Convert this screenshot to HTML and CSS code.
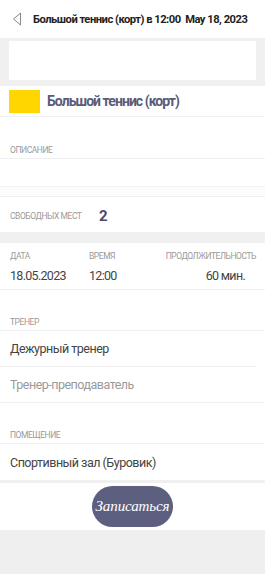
FILE: index.html
```html
<!DOCTYPE html>
<html lang="ru">
<head>
  <meta charset="utf-8" />
  <meta name="viewport" content="width=device-width,initial-scale=1" />
  <title>Большой теннис (корт)</title>
  <link rel="stylesheet" href="styles.css">
</head>
<body>
<div class="page">
  <header class="top">
    <svg class="back" width="10" height="14" viewBox="0 0 10 14">
      <path d="M8.5 1 L1.5 7 L8.5 13 Z" fill="none" stroke="#888" stroke-width="1" stroke-linejoin="round"/>
    </svg>
    <div class="top-title">Большой теннис (корт) в 12:00&nbsp; May 18, 2023</div>
  </header>

  <div class="band"><div class="band-box"></div></div>

  <div class="name-row">
    <span class="swatch"></span>
    <span class="name">Большой теннис (корт)</span>
  </div>

  <div class="label-row desc-label">ОПИСАНИЕ</div>
  <div class="empty-row"></div>
  <div class="gap-row"></div>

  <div class="seats-row">
    <span class="label">СВОБОДНЫХ МЕСТ</span>
    <span class="seats">2</span>
  </div>

  <div class="divider"></div>

  <div class="info">
    <div class="col">
      <span class="label">ДАТА</span>
      <span class="value">18.05.2023</span>
    </div>
    <div class="col">
      <span class="label">ВРЕМЯ</span>
      <span class="value">12:00</span>
    </div>
    <div class="col right">
      <span class="label">ПРОДОЛЖИТЕЛЬНОСТЬ</span>
      <span class="value">60 мин.</span>
    </div>
  </div>

  <div class="label-row sect-label">ТРЕНЕР</div>
  <div class="item inset">Дежурный тренер</div>
  <div class="item muted">Тренер-преподаватель</div>

  <div class="label-row sect-label">ПОМЕЩЕНИЕ</div>
  <div class="item last">Спортивный зал (Буровик)</div>

  <div class="actions">
    <button class="btn">Записаться</button>
  </div>
</div>
</body>
</html>
```

FILE: styles.css
```css
html,body{margin:0;height:100%;background:#efefef;font-family:Roboto,"Liberation Sans",sans-serif}
.page{background:#fff}

.top{height:38px;display:flex;align-items:center;padding-left:12px;gap:11px}
.back{flex:none}
.top-title{font-weight:700;font-size:11.2px;color:#222;letter-spacing:-.5px;white-space:nowrap}

.band{background:#f0f0f0;padding:3px 9px 6px}
.band-box{height:39px;background:#fff}

.name-row{height:30px;display:flex;align-items:center;gap:7px;padding-left:9px;border-bottom:1px solid #f0f0f0}
.swatch{width:31px;height:23px;background:#ffd600}
.name{font-size:14px;font-weight:700;color:#5b5b78;letter-spacing:-.95px}

.label,.label-row{font-size:8.5px;color:#9a9a9a;letter-spacing:-.45px}
.label-row{display:flex;align-items:flex-end;padding:0 0 3px 10px;border-bottom:1px solid #f0f0f0}
.desc-label{height:38px}
.sect-label{height:37px}

.empty-row{height:27px;border-bottom:1px solid #f2f2f2}
.gap-row{height:9px;background:#fcfcfc;border-bottom:1px solid #f0f0f0}

.seats-row{height:33px;display:flex;align-items:center;padding:2px 0 0 10px}
.seats-row .label{width:89px}
.seats{font-size:15px;font-weight:700;color:#4b4b6a}

.divider{height:11px;background:#f0f0f0}

.info{display:flex;padding:8px 9px 0 10px;height:38px;border-bottom:1px solid #f0f0f0}
.col{display:flex;flex-direction:column;gap:7px}
.col:nth-child(1){width:79px}
.col:nth-child(2){flex:1}
.col.right{align-items:flex-end}
.col.right .value{margin-right:11px}
.value{font-size:12.5px;color:#444;letter-spacing:-.7px}

.item{height:35px;display:flex;align-items:center;padding-left:10px;font-size:12.5px;color:#444;letter-spacing:-.5px;border-bottom:1px solid #f0f0f0}
.item.inset{margin-right:9px;border-bottom-color:#eeeeee}
.item.muted{color:#9a9a9a}
.item.last{height:36px;border-bottom:3px solid #f0f0f0}

.actions{height:47px;display:flex;justify-content:center;align-items:center}
.btn{width:81px;height:41px;border:0;border-radius:21px;background:#5d5f81;color:#fff;font-family:"Liberation Serif",serif;font-style:italic;font-size:15px;letter-spacing:-.1px;padding:0}
```
